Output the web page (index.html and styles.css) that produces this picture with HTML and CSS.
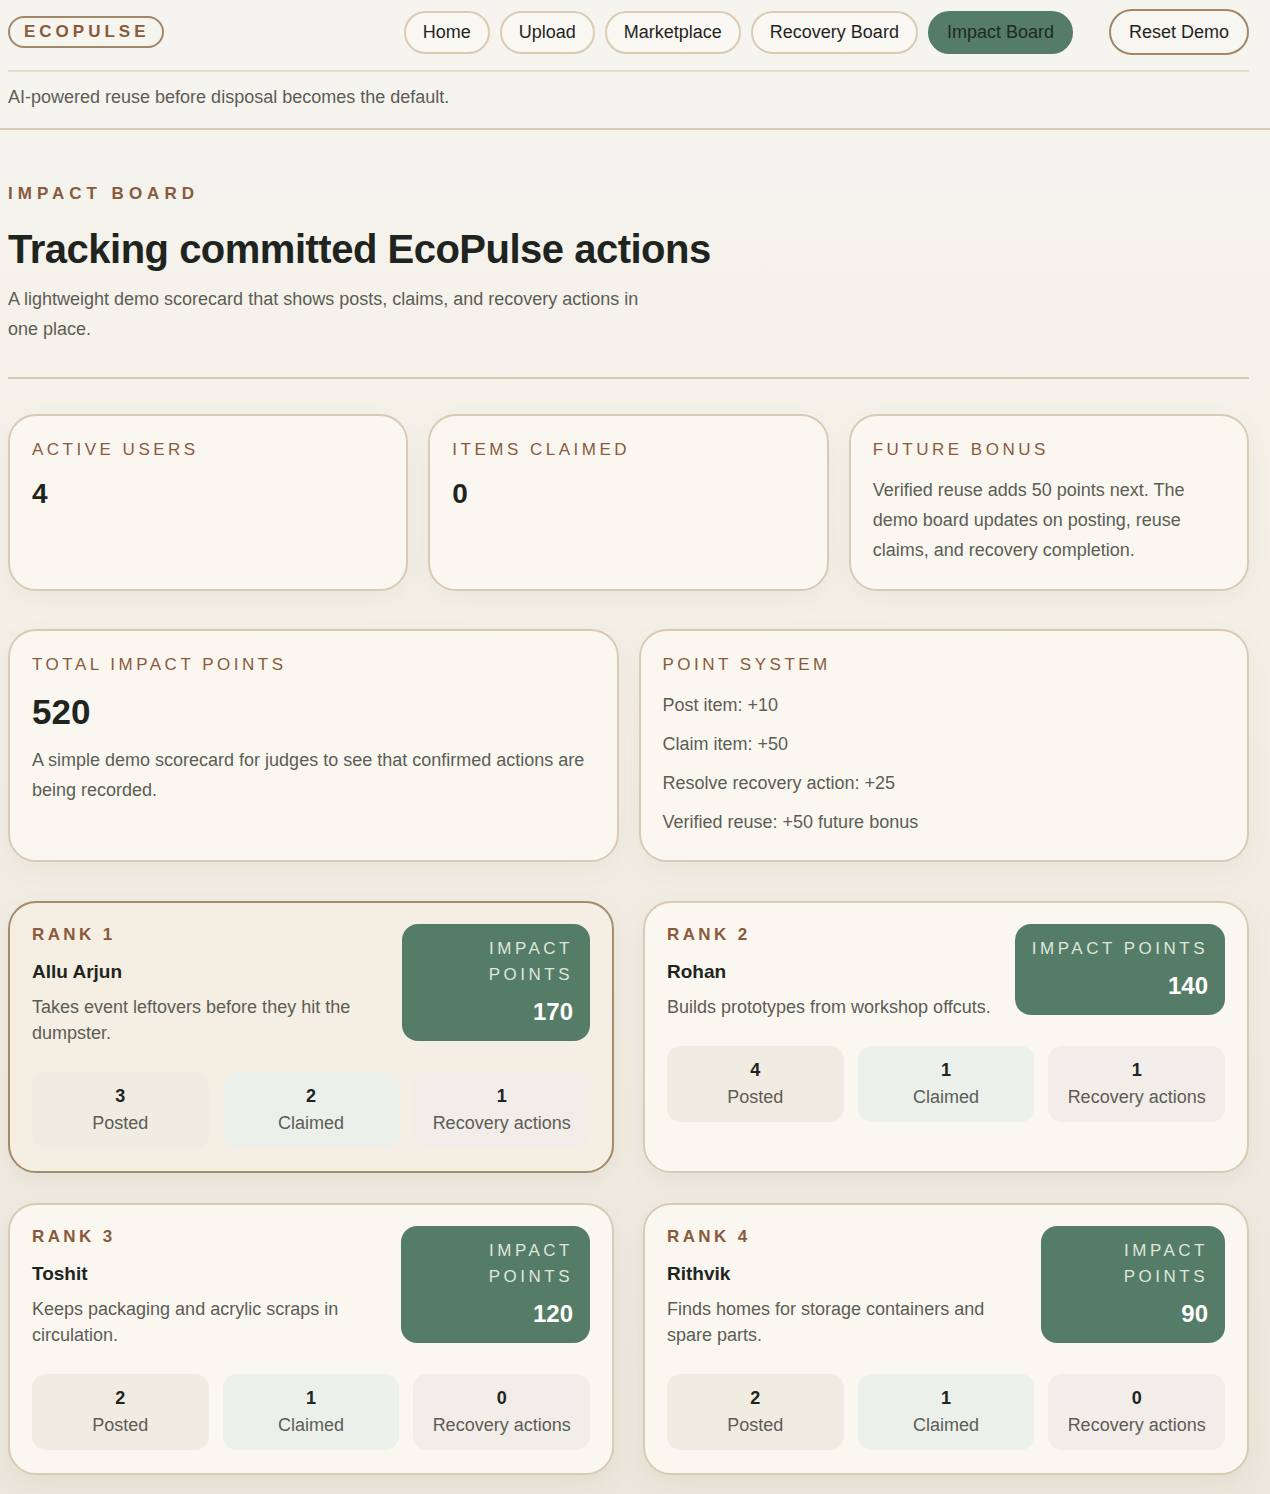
FILE: index.html
```html
<!DOCTYPE html>
<html lang="en">
<head>
<meta charset="utf-8">
<title>EcoPulse – Impact Board</title>
<link rel="stylesheet" href="styles.css">
</head>
<body>
<header class="topbar">
  <div class="shell">
    <div class="topbar-row">
      <div class="logo">ECOPULSE</div>
      <div class="topbar-right">
        <nav class="nav">
          <a class="nav-link" href="#">Home</a>
          <a class="nav-link" href="#">Upload</a>
          <a class="nav-link" href="#">Marketplace</a>
          <a class="nav-link" href="#">Recovery Board</a>
          <a class="nav-link is-active" href="#">Impact Board</a>
        </nav>
        <button class="reset-btn" type="button">Reset Demo</button>
      </div>
    </div>
    <p class="tagline">AI-powered reuse before disposal becomes the default.</p>
  </div>
</header>

<main class="shell main">
  <section class="intro">
    <div class="eyebrow">IMPACT BOARD</div>
    <h1 class="title">Tracking committed EcoPulse actions</h1>
    <p class="lede">A lightweight demo scorecard that shows posts, claims, and recovery actions in one place.</p>
  </section>

  <section class="grid-3">
    <div class="card">
      <div class="card-label">ACTIVE USERS</div>
      <div class="card-value">4</div>
    </div>
    <div class="card">
      <div class="card-label">ITEMS CLAIMED</div>
      <div class="card-value">0</div>
    </div>
    <div class="card">
      <div class="card-label">FUTURE BONUS</div>
      <p class="card-text">Verified reuse adds 50 points next. The demo board updates on posting, reuse claims, and recovery completion.</p>
    </div>
  </section>

  <section class="grid-2">
    <div class="card">
      <div class="card-label">TOTAL IMPACT POINTS</div>
      <div class="card-value big">520</div>
      <p class="card-text">A simple demo scorecard for judges to see that confirmed actions are being recorded.</p>
    </div>
    <div class="card">
      <div class="card-label">POINT SYSTEM</div>
      <ul class="rules">
        <li>Post item: +10</li>
        <li>Claim item: +50</li>
        <li>Resolve recovery action: +25</li>
        <li>Verified reuse: +50 future bonus</li>
      </ul>
    </div>
  </section>

  <section class="leaders">
    <article class="leader is-top">
      <div class="leader-head">
        <div class="leader-info">
          <div class="rank">RANK 1</div>
          <div class="name">Allu Arjun</div>
          <p class="bio">Takes event leftovers before they hit the dumpster.</p>
        </div>
        <div class="points">
          <div class="points-label">IMPACT POINTS</div>
          <div class="points-value">170</div>
        </div>
      </div>
      <div class="tallies">
        <div class="tally posted"><strong>3</strong><span>Posted</span></div>
        <div class="tally claimed"><strong>2</strong><span>Claimed</span></div>
        <div class="tally recovery"><strong>1</strong><span>Recovery actions</span></div>
      </div>
    </article>

    <article class="leader">
      <div class="leader-head">
        <div class="leader-info">
          <div class="rank">RANK 2</div>
          <div class="name">Rohan</div>
          <p class="bio">Builds prototypes from workshop offcuts.</p>
        </div>
        <div class="points">
          <div class="points-label">IMPACT POINTS</div>
          <div class="points-value">140</div>
        </div>
      </div>
      <div class="tallies">
        <div class="tally posted"><strong>4</strong><span>Posted</span></div>
        <div class="tally claimed"><strong>1</strong><span>Claimed</span></div>
        <div class="tally recovery"><strong>1</strong><span>Recovery actions</span></div>
      </div>
    </article>

    <article class="leader">
      <div class="leader-head">
        <div class="leader-info">
          <div class="rank">RANK 3</div>
          <div class="name">Toshit</div>
          <p class="bio">Keeps packaging and acrylic scraps in circulation.</p>
        </div>
        <div class="points">
          <div class="points-label">IMPACT POINTS</div>
          <div class="points-value">120</div>
        </div>
      </div>
      <div class="tallies">
        <div class="tally posted"><strong>2</strong><span>Posted</span></div>
        <div class="tally claimed"><strong>1</strong><span>Claimed</span></div>
        <div class="tally recovery"><strong>0</strong><span>Recovery actions</span></div>
      </div>
    </article>

    <article class="leader">
      <div class="leader-head">
        <div class="leader-info">
          <div class="rank">RANK 4</div>
          <div class="name">Rithvik</div>
          <p class="bio">Finds homes for storage containers and spare parts.</p>
        </div>
        <div class="points">
          <div class="points-label">IMPACT POINTS</div>
          <div class="points-value">90</div>
        </div>
      </div>
      <div class="tallies">
        <div class="tally posted"><strong>2</strong><span>Posted</span></div>
        <div class="tally claimed"><strong>1</strong><span>Claimed</span></div>
        <div class="tally recovery"><strong>0</strong><span>Recovery actions</span></div>
      </div>
    </article>
  </section>
</main>
</body>
</html>
```

FILE: styles.css
```css
* { box-sizing: border-box; }

html, body {
  margin: 0;
  padding: 0;
}

body {
  font-family: "Liberation Sans", Arial, Helvetica, sans-serif;
  color: #1f241f;
  font-size: 18px;
  background: linear-gradient(180deg, #f5f4ef 0%, #f4f1e9 30%, #ece7dc 100%);
  min-height: 1494px;
}

.shell {
  width: 1241px;
  margin-left: 8px;
}

/* ---------- top bar ---------- */
.topbar {
  background: #f5f4ef;
  border-bottom: 2px solid #d8cbb3;
}

.topbar-row {
  display: flex;
  align-items: center;
  justify-content: space-between;
  padding: 9px 0 15px;
  border-bottom: 2px solid #e4ddd0;
}

.logo {
  border: 2px solid #a08868;
  border-radius: 999px;
  padding: 4px 12px 4px 14px;
  font-weight: 700;
  font-size: 17px;
  letter-spacing: 4px;
  color: #8a5a3c;
  line-height: 20px;
  margin-top: -1px;
}

.topbar-right {
  display: flex;
  align-items: center;
  gap: 36px;
}

.nav {
  display: flex;
  gap: 10px;
}

.nav-link {
  display: block;
  text-decoration: none;
  color: #1f241f;
  font-size: 18px;
  line-height: 21px;
  padding: 9px 17px;
  border: 2px solid #d9ccb5;
  border-radius: 999px;
  background: #faf8f2;
}

.nav-link.is-active {
  background: #557c66;
  border-color: #557c66;
  color: #1f2a22;
}

.reset-btn {
  font-family: inherit;
  font-size: 18px;
  line-height: 22px;
  color: #1f241f;
  padding: 10px 18px;
  border: 2px solid #a08868;
  border-radius: 999px;
  background: #f8f6f0;
  cursor: pointer;
}

.tagline {
  margin: 0;
  padding: 12px 0 18px;
  font-size: 18px;
  line-height: 26px;
  color: #5c5d55;
}

/* ---------- intro ---------- */
.main {
  padding-top: 53px;
  padding-bottom: 20px;
}

.intro {
  border-bottom: 2px solid #d5c8b2;
  padding-bottom: 33px;
  margin-bottom: 35px;
}

.eyebrow {
  font-weight: 700;
  font-size: 17px;
  line-height: 22px;
  letter-spacing: 5px;
  color: #8a5a3c;
}

.title {
  margin: 20px 0 0;
  font-size: 40px;
  line-height: 48px;
  letter-spacing: -0.5px;
  font-weight: 700;
  color: #1f241f;
}

.lede {
  margin: 11px 0 0;
  max-width: 650px;
  font-size: 18px;
  line-height: 30px;
  color: #5c5d55;
}

/* ---------- cards ---------- */
.grid-3 {
  display: grid;
  grid-template-columns: repeat(3, 1fr);
  gap: 20px;
  margin-bottom: 38px;
}

.grid-2 {
  display: grid;
  grid-template-columns: repeat(2, 1fr);
  gap: 20px;
  margin-bottom: 39px;
}

.card {
  background: #faf7f1;
  border: 2px solid #d8cbb3;
  border-radius: 28px;
  padding: 23px 22px 24px;
  box-shadow: 0 8px 24px rgba(120, 100, 70, 0.06);
}

.card-label {
  font-size: 17px;
  line-height: 22px;
  letter-spacing: 3.5px;
  color: #8a5a3c;
}

.card-value {
  margin-top: 16px;
  font-size: 28px;
  line-height: 34px;
  font-weight: 700;
  color: #1f241f;
}

.card-value.big {
  margin-top: 15px;
  font-size: 35px;
  line-height: 42px;
}

.card-text {
  margin: 14px 0 0;
  font-size: 18px;
  line-height: 30px;
  color: #5c5d55;
}

.card-value + .card-text {
  margin-top: 12px;
}

.rules {
  list-style: none;
  margin: 16px 0 0;
  padding: 0;
}

.rules li {
  font-size: 18px;
  line-height: 27px;
  color: #5c5d55;
  margin-bottom: 12px;
}

.rules li:last-child {
  margin-bottom: 0;
}

/* ---------- leaders ---------- */
.leaders {
  display: grid;
  grid-template-columns: 606px 606px;
  column-gap: 29px;
  row-gap: 30px;
}

.leader {
  background: #faf7f1;
  border: 2px solid #d8cbb3;
  border-radius: 28px;
  padding: 21px 22px 23px;
  box-shadow: 0 8px 24px rgba(120, 100, 70, 0.07);
}

.leader.is-top {
  background: #f5eee2;
  border-color: #a48b6a;
}

.leader-head {
  display: flex;
  justify-content: space-between;
  align-items: flex-start;
  gap: 20px;
}

.leader-info {
  flex: 1 1 auto;
}

.rank {
  font-weight: 700;
  font-size: 17px;
  line-height: 22px;
  letter-spacing: 3.4px;
  color: #8a5a3c;
}

.name {
  margin-top: 13px;
  font-weight: 700;
  font-size: 19px;
  line-height: 26px;
  color: #1f241f;
}

.bio {
  margin: 9px 0 0;
  font-size: 18px;
  line-height: 26px;
  color: #5c5d55;
}

.points {
  flex: 0 1 auto;
  background: #557c66;
  border-radius: 16px;
  padding: 12px 17px 13px;
  text-align: right;
}

.points-label {
  font-size: 17px;
  line-height: 26px;
  letter-spacing: 3.5px;
  color: #dfe6dc;
}

.points-value {
  margin-top: 8px;
  font-weight: 700;
  font-size: 24px;
  line-height: 32px;
  color: #ffffff;
}

.tallies {
  display: grid;
  grid-template-columns: repeat(3, 1fr);
  gap: 14px;
  margin-top: 26px;
}

.tally {
  display: flex;
  flex-direction: column;
  align-items: center;
  padding: 12px 8px;
  border-radius: 14px;
  text-align: center;
}

.tally strong {
  font-size: 18px;
  line-height: 24px;
  color: #1f241f;
}

.tally span {
  margin-top: 2px;
  font-size: 18px;
  line-height: 26px;
  color: #5c5d55;
}

.tally.posted { background: #f1ece2; }
.tally.claimed { background: #ecf0ea; }
.tally.recovery { background: #f2ede8; }
```
